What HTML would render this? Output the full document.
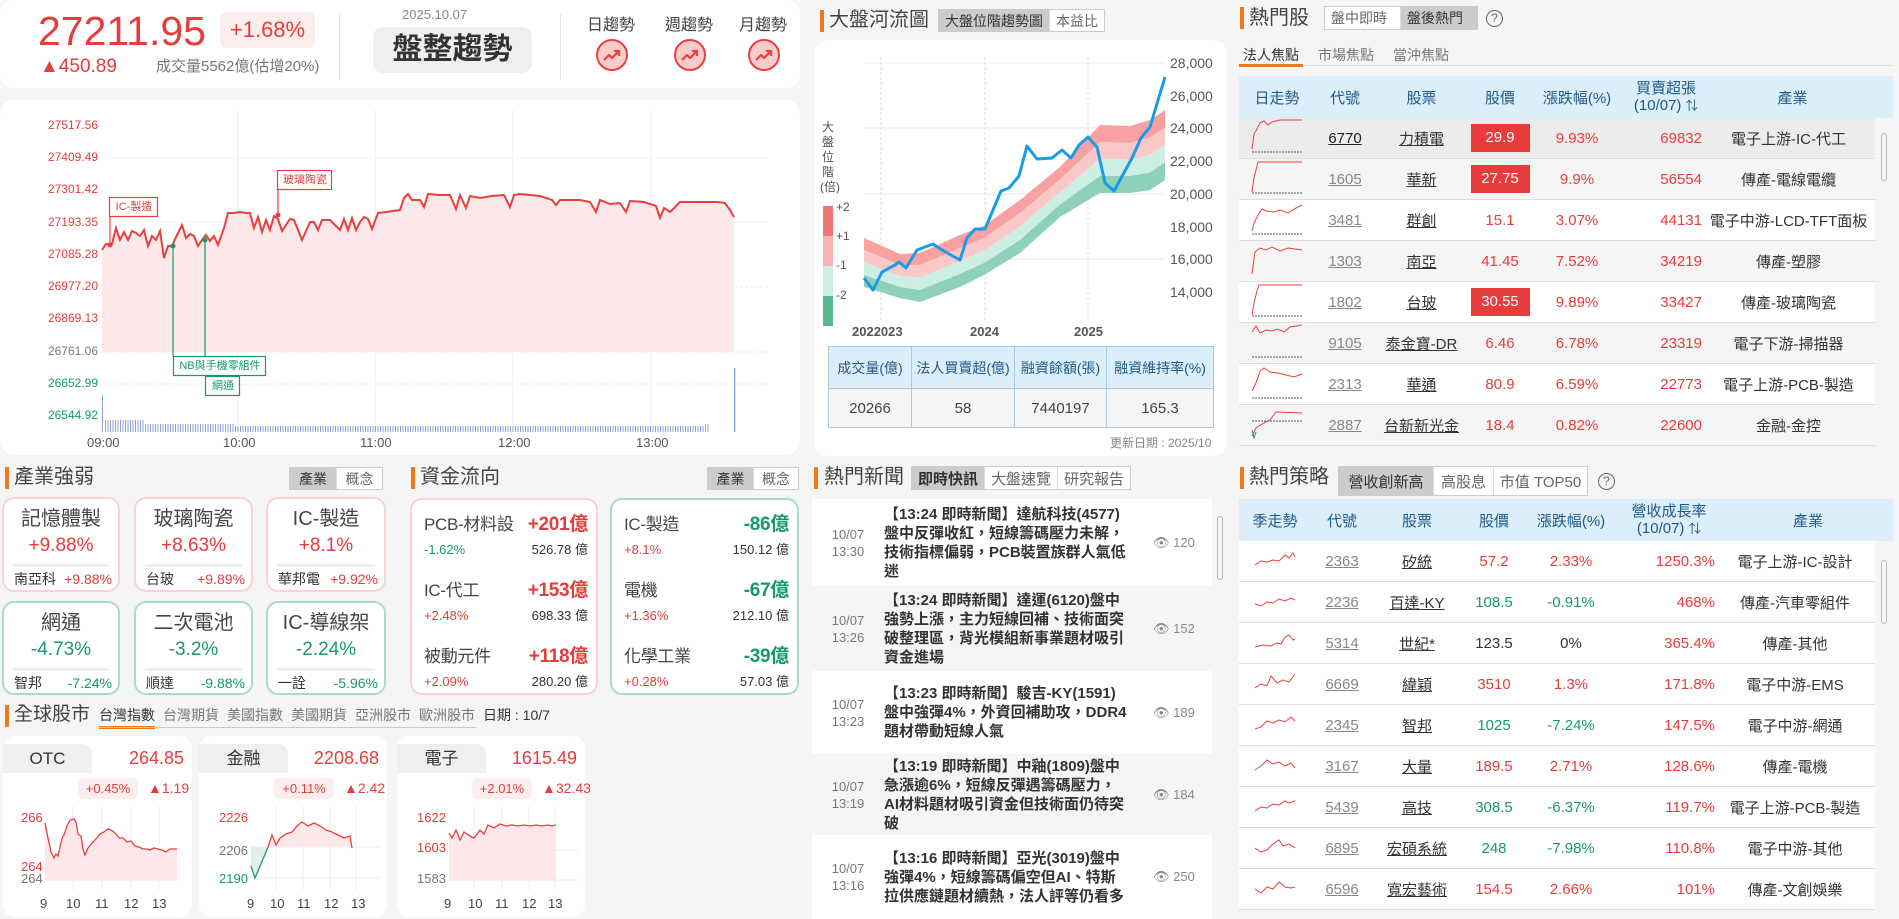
<!DOCTYPE html>
<html><head><meta charset="utf-8">
<style>
*{box-sizing:border-box;margin:0;padding:0}
body{width:1899px;height:919px;overflow:hidden;background:#f5f5f5;font-family:"Liberation Sans","Noto Sans CJK TC",sans-serif;color:#333;position:relative}
.a{position:absolute}
.card{position:absolute;background:#fff;border-radius:14px}
.bar{position:absolute;width:4px;background:#f07a1a}
.h{position:absolute;font-size:20px;color:#444;line-height:22px}
.tabs{position:absolute;display:flex;border:1px solid #ccc;background:#fff;font-size:14px;color:#666;white-space:nowrap}
.tabs div{padding:0 6px;display:flex;align-items:center;border-left:1px solid #ddd}
.tabs div:first-child{border-left:none}
.tabs .on{background:#ccc;color:#333}
.r{color:#e63c3c}.g{color:#169a6a}
.ic{position:absolute;border-radius:12px;background:#fff;text-align:center}
.ic.rb{border:2px solid #f9d2d2}.ic.gb{border:2px solid #a9dcc6}
.ic .t{font-size:20px;color:#444;margin-top:8px;line-height:24px}
.ic .p{font-size:19px;line-height:24px;margin-top:3px}
.ic .ln{height:3px;background:#eee;margin:6px 9px 0}
.ic .s{display:flex;justify-content:space-between;font-size:14px;padding:2px 6px 0 10px;line-height:20px}
.ff{position:absolute;border-radius:12px;background:#fff;padding:12px 8px 0 12px}
.ff.rb{border:2px solid #f9d2d2}.ff.gb{border:2px solid #a9dcc6}
.ff .row{height:66px}
.ff .l1{display:flex;justify-content:space-between;font-size:17px;line-height:26px;color:#444;white-space:nowrap;letter-spacing:-0.3px}
.ff .l1 b{font-size:19px}
.ff .l2{display:flex;justify-content:space-between;font-size:13px;line-height:20px;margin-top:2px;white-space:nowrap}
.tbl{position:absolute;left:1239px;width:654px;font-size:15px}
.th{display:flex;background:#dbeef9;color:#1e5a8a;align-items:center;height:42px;font-size:15px}
.tr{display:flex;align-items:center;height:41px;border-bottom:1px solid #ddd}
.tbl div>span{display:block;text-align:center}
.u{text-decoration:underline}
.cg{color:#888}
.news{position:absolute;left:812px;width:400px;display:flex;align-items:center}
.news .d{width:72px;text-align:center;font-size:13px;color:#777;line-height:17px}
.news .x{width:245px;font-size:15px;line-height:19px;color:#333;font-weight:bold}
.news .v{margin-left:24px;font-size:13px;color:#888}
.gmb{position:absolute;background:#fff;border-radius:12px;top:736px;height:181px}
.gm{position:absolute;top:736px;height:181px}
.gm .tab{position:absolute;left:0;top:8px;width:89px;height:29px;background:#eeeff1;border-radius:0 10px 0 0;text-align:center;font-size:17px;line-height:29px;color:#333}
.gm .val{position:absolute;right:8px;top:12px;font-size:18px;color:#e63c3c}
.gm .pill{position:absolute;left:75px;top:42px;width:60px;height:21px;background:#fdeeee;border-radius:6px;font-size:13px;color:#e63c3c;text-align:center;line-height:21px}
.gm .ch{position:absolute;left:145px;top:42px;font-size:14px;color:#e63c3c;line-height:21px}
</style></head><body>

<!-- top-left summary card -->
<div class="card" style="left:0;top:0;width:800px;height:88px"></div>
<div class="a r" style="left:38px;top:8px;font-size:41px;line-height:46px">27211.95</div>
<div class="a r" style="left:220px;top:12px;width:95px;height:36px;background:#fdeeee;border-radius:6px;font-size:22px;line-height:36px;text-align:center">+1.68%</div>
<div class="a r" style="left:40px;top:55px;font-size:19px;line-height:24px">▲450.89</div>
<div class="a" style="left:156px;top:57px;font-size:15px;color:#777;line-height:20px">成交量5562億(估增20%)</div>
<div class="a" style="left:339px;top:14px;width:1px;height:66px;background:#e5e5e5"></div>
<div class="a" style="left:560px;top:14px;width:1px;height:66px;background:#e5e5e5"></div>
<div class="a" style="left:402px;top:7px;font-size:13px;color:#888">2025.10.07</div>
<div class="a" style="left:373px;top:27px;width:159px;height:46px;background:#efefef;border-radius:10px;font-size:30px;font-weight:bold;text-align:center;line-height:46px;color:#333">盤整趨勢</div>
<div class="a" style="left:587px;top:11px;font-size:16px;color:#444">日趨勢</div>
<div class="a" style="left:665px;top:11px;font-size:16px;color:#444">週趨勢</div>
<div class="a" style="left:739px;top:11px;font-size:16px;color:#444">月趨勢</div>

<div class="card" style="left:0;top:100px;width:800px;height:355px"></div>
<div class="card" style="left:814px;top:40px;width:413px;height:416px"></div>
<div class="a" style="left:812px;top:499px;width:400px;height:87px;background:#fff"></div>
<div class="a" style="left:812px;top:586px;width:400px;height:85px;background:#f5f5f5"></div>
<div class="a" style="left:812px;top:671px;width:400px;height:83px;background:#fff"></div>
<div class="a" style="left:812px;top:754px;width:400px;height:81px;background:#f5f5f5"></div>
<div class="a" style="left:812px;top:835px;width:400px;height:84px;background:#fff"></div>
<div class="gmb" style="left:3px;width:189px"></div>
<div class="gmb" style="left:199px;width:188px"></div>
<div class="gmb" style="left:397px;width:188px"></div>

<svg class="a" style="left:0;top:0" width="1899" height="919" viewBox="0 0 1899 919">
 <g fill="#fbcaca" stroke="#e84040" stroke-width="2">
  <circle cx="612" cy="55" r="15"/><circle cx="690" cy="55" r="15"/><circle cx="764" cy="55" r="15"/>
 </g>
 <g fill="none" stroke="#e84040" stroke-width="2.2" stroke-linejoin="round">
  <path d="M604 60l5-5 3 3 7-7M614 51h5v5"/><path d="M682 60l5-5 3 3 7-7M692 51h5v5"/><path d="M756 60l5-5 3 3 7-7M766 51h5v5"/>
 </g>
 <g stroke="#ececec" stroke-width="1" stroke-dasharray="3 2">
  <line x1="100" y1="158" x2="768" y2="158"/><line x1="100" y1="222" x2="768" y2="222"/><line x1="100" y1="287" x2="768" y2="287"/><line x1="100" y1="352" x2="768" y2="352"/><line x1="100" y1="384" x2="768" y2="384"/>
 </g>
 <g stroke="#ececec"><line x1="238" y1="110" x2="238" y2="432"/><line x1="375" y1="110" x2="375" y2="432"/><line x1="513" y1="110" x2="513" y2="432"/><line x1="651" y1="110" x2="651" y2="432"/></g>
 <path fill="#fce8e8" d="M102 250 L106 244 L112 244 L116 228 L120 240 L124 232 L128 240 L132 231 L136 233 L140 236 L144 230 L148 246 L152 236 L156 240 L160 231 L164 258 L168 246 L172 246 L176 237 L182 225 L186 238 L190 234 L194 236 L198 246 L202 240 L206 235 L210 241 L214 236 L218 245 L224 228 L228 213 L234 213 L240 212 L246 213 L250 213 L254 228 L258 217 L262 232 L266 220 L270 230 L274 216 L278 219 L282 231 L286 225 L290 219 L294 220 L298 230 L302 240 L306 231 L310 222 L314 222 L318 230 L322 220 L330 220 L336 226 L340 230 L344 219 L348 230 L352 218 L356 230 L360 222 L364 217 L368 219 L372 229 L378 213 L386 212 L400 210 L404 198 L408 194 L412 200 L420 200 L424 207 L428 194 L440 195 L450 195 L456 209 L460 195 L466 208 L470 196 L480 198 L492 196 L504 195 L510 207 L514 195 L520 194 L540 196 L552 200 L556 205 L560 200 L580 200 L590 202 L596 212 L600 200 L610 204 L620 203 L626 212 L630 201 L644 202 L656 206 L660 218 L664 208 L670 212 L674 208 L680 202 L700 202 L718 202 L725 203 L730 210 L734 217 L734 352 L102 352Z"/>
 <path fill="none" stroke="#e84040" stroke-width="2" d="M102 250 L106 244 L112 244 L116 228 L120 240 L124 232 L128 240 L132 231 L136 233 L140 236 L144 230 L148 246 L152 236 L156 240 L160 231 L164 258 L168 246 L172 246 L176 237 L182 225 L186 238 L190 234 L194 236 L198 246 L202 240 L206 235 L210 241 L214 236 L218 245 L224 228 L228 213 L234 213 L240 212 L246 213 L250 213 L254 228 L258 217 L262 232 L266 220 L270 230 L274 216 L278 219 L282 231 L286 225 L290 219 L294 220 L298 230 L302 240 L306 231 L310 222 L314 222 L318 230 L322 220 L330 220 L336 226 L340 230 L344 219 L348 230 L352 218 L356 230 L360 222 L364 217 L368 219 L372 229 L378 213 L386 212 L400 210 L404 198 L408 194 L412 200 L420 200 L424 207 L428 194 L440 195 L450 195 L456 209 L460 195 L466 208 L470 196 L480 198 L492 196 L504 195 L510 207 L514 195 L520 194 L540 196 L552 200 L556 205 L560 200 L580 200 L590 202 L596 212 L600 200 L610 204 L620 203 L626 212 L630 201 L644 202 L656 206 L660 218 L664 208 L670 212 L674 208 L680 202 L700 202 L718 202 L725 203 L730 210 L734 217"/>
 <defs><pattern id="vb" width="2.5" height="10" patternUnits="userSpaceOnUse"><rect width="1" height="10" fill="#8aa0d8"/></pattern></defs>
 <rect x="102" y="395" width="1" height="37" fill="#8aa0d8"/>
 <rect x="104" y="420" width="40" height="12" fill="url(#vb)"/>
 <rect x="144" y="424" width="90" height="8" fill="url(#vb)"/>
 <rect x="234" y="426" width="470" height="6" fill="url(#vb)"/>
 <rect x="704" y="424" width="6" height="8" fill="url(#vb)"/>
 <rect x="734" y="368" width="1.3" height="64" fill="#8aa0d8"/>
 <g fill="none" stroke-width="1.2">
  <line x1="110" y1="216" x2="110" y2="245" stroke="#e84040"/>
  <rect x="109.5" y="197.5" width="48" height="19" fill="#fff" stroke="#e84040"/>
  <line x1="278" y1="189" x2="278" y2="215" stroke="#e84040"/>
  <rect x="277.5" y="170.5" width="54" height="19" fill="#fff" stroke="#e84040"/>
  <line x1="173" y1="246" x2="173" y2="357" stroke="#169a6a"/>
  <line x1="205" y1="240" x2="205" y2="376" stroke="#169a6a"/>
  <rect x="173.5" y="356.5" width="92" height="19" fill="#fff" stroke="#169a6a"/>
  <rect x="205.5" y="376.5" width="34" height="19" fill="#fff" stroke="#169a6a"/>
 </g>
 <circle cx="173" cy="246" r="2.5" fill="#169a6a"/><circle cx="205" cy="240" r="2.5" fill="#169a6a"/><circle cx="110" cy="245" r="2.5" fill="#e84040"/><circle cx="278" cy="215" r="2.5" fill="#e84040"/>

 <g stroke="#e8e8e8"><line x1="864" y1="63" x2="1165" y2="63"/><line x1="864" y1="128" x2="1165" y2="128"/><line x1="864" y1="194" x2="1165" y2="194"/><line x1="864" y1="259" x2="1165" y2="259"/></g>
 <g stroke="#ddd" stroke-dasharray="3 2"><line x1="881" y1="57" x2="881" y2="320"/><line x1="985" y1="57" x2="985" y2="320"/><line x1="1088" y1="57" x2="1088" y2="320"/></g>
 <path fill="#f9a0a0" d="M864 238 L900 254 L920 253 L960 235 L984 226 L1020 200 L1060 167 L1100 125 L1130 126 L1150 120 L1165 110 L1165 127.5 L1150 137.5 L1130 143 L1100 142 L1060 179.5 L1020 213 L984 238 L960 248 L920 265 L900 265 L864 250Z"/>
 <path fill="#fbc8c8" d="M864 250 L900 265 L920 265 L960 248 L984 238 L1020 213 L1060 179.5 L1100 142 L1130 143 L1150 137.5 L1165 127.5 L1165 145 L1150 155 L1130 159.5 L1100 159 L1060 192 L1020 226.5 L984 250.5 L960 261 L920 277.5 L900 276 L864 262.5Z"/>
 <path fill="#cdeee2" d="M864 262.5 L900 276 L920 277.5 L960 261 L984 250.5 L1020 226.5 L1060 192 L1100 159 L1130 159.5 L1150 155 L1165 145 L1165 162.5 L1150 172.5 L1130 176 L1100 176 L1060 204.5 L1020 240 L984 263 L960 274 L920 290 L900 287 L864 275Z"/>
 <path fill="#8fd1b8" d="M864 275 L900 287 L920 290 L960 274 L984 263 L1020 240 L1060 204.5 L1100 176 L1130 176 L1150 172.5 L1165 162.5 L1165 180 L1150 190 L1130 193 L1100 193 L1060 217 L1020 253 L984 275 L960 287 L920 302 L900 298 L864 287Z"/>
 <path fill="none" stroke="#1a9be8" stroke-width="3" stroke-linejoin="round" d="M864 278 L873 290 L882 272 L895 265 L899 262 L906 268 L917 250 L933 244 L942 250 L960 260 L967 238 L975 229 L985 229 L993 210 L1001 191 L1009 188 L1019 176 L1027 146 L1037 159 L1052 158 L1062 150 L1071 158 L1079 145 L1088 137 L1097 147 L1105 183 L1114 191 L1132 158 L1141 138 L1150 127 L1165 77"/>
 <rect x="823" y="206" width="10" height="30" fill="#f07575"/>
 <rect x="823" y="236" width="10" height="30" fill="#f8b4b4"/>
 <rect x="823" y="266" width="10" height="30" fill="#cdeee2"/>
 <rect x="823" y="296" width="10" height="30" fill="#57b88f"/>

 <g stroke="#eee"><line x1="73" y1="806" x2="73" y2="890"/><line x1="102" y1="806" x2="102" y2="890"/><line x1="131" y1="806" x2="131" y2="890"/><line x1="159" y1="806" x2="159" y2="890"/>
 <line x1="276" y1="806" x2="276" y2="890"/><line x1="303" y1="806" x2="303" y2="890"/><line x1="330" y1="806" x2="330" y2="890"/><line x1="356" y1="806" x2="356" y2="890"/>
 <line x1="474" y1="806" x2="474" y2="890"/><line x1="502" y1="806" x2="502" y2="890"/><line x1="529" y1="806" x2="529" y2="890"/><line x1="555" y1="806" x2="555" y2="890"/>
 <line x1="45" y1="866" x2="178" y2="866"/><line x1="45" y1="880" x2="178" y2="880"/><line x1="250" y1="847" x2="380" y2="847"/><line x1="250" y1="878" x2="380" y2="878"/><line x1="448" y1="850" x2="578" y2="850"/><line x1="448" y1="880" x2="578" y2="880"/></g>
 <path fill="#fce8e8" d="M45 823 L48 838 L51 852 L54 858 L56 854 L58 856 L62 838 L64 835 L67 826 L70 820 L74 819 L76 822 L78 834 L81 836 L83 849 L85 855 L88 848 L92 843 L96 839 L100 834 L104 832 L108 829 L111 830 L115 833 L119 838 L123 838 L127 842 L131 841 L135 846 L139 847 L143 849 L147 849 L150 850 L154 848 L158 849 L162 850 L166 852 L170 849 L174 849 L177 849 L177 880 L45 880Z"/>
 <path fill="none" stroke="#e84040" stroke-width="1.3" d="M45 823 L48 838 L51 852 L54 858 L56 854 L58 856 L62 838 L64 835 L67 826 L70 820 L74 819 L76 822 L78 834 L81 836 L83 849 L85 855 L88 848 L92 843 L96 839 L100 834 L104 832 L108 829 L111 830 L115 833 L119 838 L123 838 L127 842 L131 841 L135 846 L139 847 L143 849 L147 849 L150 850 L154 848 L158 849 L162 850 L166 852 L170 849 L174 849 L177 849"/>
 <path fill="#e4efea" d="M251 847 L251 866 L255 878 L260 866 L266 852 L268 847Z"/>
 <path fill="none" stroke="#169a6a" stroke-width="1.3" d="M251 866 L255 878 L260 866 L266 852 L268 847"/>
 <path fill="#fce8e8" d="M268 847 L272 835 L276 845 L280 838 L286 834 L292 832 L297 826 L302 822 L308 826 L314 823 L320 826 L326 830 L332 832 L338 835 L344 838 L350 836 L352 848 L352 847Z"/>
 <path fill="none" stroke="#e84040" stroke-width="1.3" d="M268 847 L272 835 L276 845 L280 838 L286 834 L292 832 L297 826 L302 822 L308 826 L314 823 L320 826 L326 830 L332 832 L338 835 L344 838 L350 836 L352 848"/>
 <path fill="#fce8e8" d="M449 833 L452 838 L456 830 L460 840 L464 832 L470 836 L474 838 L480 830 L484 834 L488 825 L494 828 L500 824 L506 826 L512 825 L518 826 L524 825 L530 826 L536 825 L542 826 L548 825 L552 826 L556 825 L556 880 L449 880Z"/>
 <path fill="none" stroke="#e84040" stroke-width="1.3" d="M449 833 L452 838 L456 830 L460 840 L464 832 L470 836 L474 838 L480 830 L484 834 L488 825 L494 828 L500 824 L506 826 L512 825 L518 826 L524 825 L530 826 L536 825 L542 826 L548 825 L552 826 L556 825"/>
</svg>

<div class="a" style="left:40px;top:110px;width:58px;font-size:12px;line-height:15px;text-align:right">
 <div class="r" style="position:absolute;top:8px;right:0">27517.56</div>
 <div class="r" style="position:absolute;top:40px;right:0">27409.49</div>
 <div class="r" style="position:absolute;top:72px;right:0">27301.42</div>
 <div class="r" style="position:absolute;top:105px;right:0">27193.35</div>
 <div class="r" style="position:absolute;top:137px;right:0">27085.28</div>
 <div class="r" style="position:absolute;top:169px;right:0">26977.20</div>
 <div class="r" style="position:absolute;top:201px;right:0">26869.13</div>
 <div style="position:absolute;top:234px;right:0;color:#777">26761.06</div>
 <div class="g" style="position:absolute;top:266px;right:0">26652.99</div>
 <div class="g" style="position:absolute;top:298px;right:0">26544.92</div>
</div>
<div class="a" style="left:87px;top:435px;font-size:13px;color:#555">09:00</div>
<div class="a" style="left:223px;top:435px;font-size:13px;color:#555">10:00</div>
<div class="a" style="left:360px;top:435px;font-size:13px;color:#555">11:00</div>
<div class="a" style="left:498px;top:435px;font-size:13px;color:#555">12:00</div>
<div class="a" style="left:636px;top:435px;font-size:13px;color:#555">13:00</div>
<div class="a r" style="left:110px;top:199px;width:48px;font-size:11px;text-align:center;line-height:17px">IC-製造</div>
<div class="a r" style="left:278px;top:172px;width:54px;font-size:11px;text-align:center;line-height:17px">玻璃陶瓷</div>
<div class="a g" style="left:174px;top:358px;width:92px;font-size:11px;text-align:center;line-height:17px">NB與手機零組件</div>
<div class="a g" style="left:206px;top:378px;width:34px;font-size:11px;text-align:center;line-height:17px">網通</div>

<div class="bar" style="left:820px;top:10px;height:22px"></div>
<div class="h" style="left:829px;top:9px">大盤河流圖</div>
<div class="tabs" style="left:938px;top:9px;height:23px"><div class="on">大盤位階趨勢圖</div><div>本益比</div></div>
<div class="a" style="left:820px;top:120px;width:16px;font-size:12px;line-height:15px;text-align:center;color:#555">大<br>盤<br>位<br>階<br>(倍)</div>
<div class="a" style="left:836px;top:200px;font-size:12px;color:#555;line-height:14px">+2</div>
<div class="a" style="left:836px;top:229px;font-size:12px;color:#555;line-height:14px">+1</div>
<div class="a" style="left:836px;top:258px;font-size:12px;color:#555;line-height:14px">-1</div>
<div class="a" style="left:836px;top:288px;font-size:12px;color:#555;line-height:14px">-2</div>
<div class="a" style="left:1170px;top:54px;font-size:14px;color:#555;line-height:18px">28,000<br><span style="display:block;margin-top:15px">26,000</span><span style="display:block;margin-top:14px">24,000</span><span style="display:block;margin-top:15px">22,000</span><span style="display:block;margin-top:15px">20,000</span><span style="display:block;margin-top:15px">18,000</span><span style="display:block;margin-top:14px">16,000</span><span style="display:block;margin-top:15px">14,000</span></div>
<div class="a" style="left:852px;top:324px;font-size:13px;font-weight:bold;color:#555">2022023</div>
<div class="a" style="left:970px;top:324px;font-size:13px;font-weight:bold;color:#555">2024</div>
<div class="a" style="left:1074px;top:324px;font-size:13px;font-weight:bold;color:#555">2025</div>
<table class="a" style="left:828px;top:346px;width:386px;border-collapse:collapse;font-size:14px;text-align:center">
<tr style="height:42px;background:#dbeef9;color:#1e5a8a"><td style="border:1px solid #a9cbe0;width:83px">成交量(億)</td><td style="border:1px solid #a9cbe0;width:103px">法人買賣超(億)</td><td style="border:1px solid #a9cbe0;width:92px">融資餘額(張)</td><td style="border:1px solid #a9cbe0">融資維持率(%)</td></tr>
<tr style="height:39px;background:#f5f5f5;font-size:15px;color:#444"><td style="border:1px solid #a9cbe0">20266</td><td style="border:1px solid #a9cbe0">58</td><td style="border:1px solid #a9cbe0">7440197</td><td style="border:1px solid #a9cbe0">165.3</td></tr>
</table>
<div class="a" style="left:1110px;top:434px;font-size:12px;color:#888">更新日期 : 2025/10</div>

<div class="bar" style="left:1240px;top:7px;height:22px"></div>
<div class="h" style="left:1249px;top:7px">熱門股</div>
<div class="tabs" style="left:1324px;top:6px;height:24px;font-size:14px"><div style="width:75px">盤中即時</div><div class="on" style="width:77px">盤後熱門</div></div>
<div class="a" style="left:1486px;top:10px;width:17px;height:17px;border:1.5px solid #666;border-radius:50%;font-size:12px;text-align:center;line-height:14px;color:#666">?</div>
<div class="a" style="left:1243px;top:45px;font-size:14px;color:#333">法人焦點</div>
<div class="a" style="left:1318px;top:45px;font-size:14px;color:#777">市場焦點</div>
<div class="a" style="left:1393px;top:45px;font-size:14px;color:#777">當沖焦點</div>
<div class="a" style="left:1239px;top:65px;width:654px;height:1px;background:#ddd"></div>
<div class="a" style="left:1239px;top:64px;width:64px;height:3px;background:#f07a1a"></div>

<div class="tbl" style="top:76px">
 <div class="th"><span style="width:76px">日走勢</span><span style="width:60px">代號</span><span style="width:93px">股票</span><span style="width:64px">股價</span><span style="width:90px">漲跌幅(%)</span><span style="width:88px;line-height:17px">買賣超張<br>(10/07) <small>⇅</small></span><span style="width:165px">產業</span></div>
</div>
<div class="tbl" style="top:118px;width:636px">
 <div class="tr" style="background:#ececec"><span style="width:76px"><svg width="54" height="34"><path d="M2 30 L4 15 L7 10 L10 4 L14 2 L18 6 L22 3 L30 1 L52 1" fill="none" stroke="#e84040"/><line x1="2" y1="33" x2="52" y2="33" stroke="#555" stroke-dasharray="2 1"/></svg></span><span class="u" style="width:60px;color:#222">6770</span><span class="u" style="width:93px">力積電</span><span style="width:64px"><span style="display:inline-block;width:59px;height:28px;line-height:28px;background:#e83c3c;color:#fff">29.9</span></span><span class="r" style="width:90px">9.93%</span><span class="r" style="width:80px;text-align:right!important">69832</span><span style="width:173px">電子上游-IC-代工</span></div>
 <div class="tr" style="background:#f5f5f5"><span style="width:76px"><svg width="54" height="34"><path d="M2 32 L4 18 L6 10 L8 2 L52 2" fill="none" stroke="#e84040"/><line x1="2" y1="33" x2="52" y2="33" stroke="#555" stroke-dasharray="2 1"/></svg></span><span class="u cg" style="width:60px">1605</span><span class="u" style="width:93px">華新</span><span style="width:64px"><span style="display:inline-block;width:59px;height:28px;line-height:28px;background:#e83c3c;color:#fff">27.75</span></span><span class="r" style="width:90px">9.9%</span><span class="r" style="width:80px;text-align:right!important">56554</span><span style="width:173px">傳產-電線電纜</span></div>
 <div class="tr" style="background:#fff"><span style="width:76px"><svg width="54" height="34"><path d="M2 30 L4 22 L8 14 L12 8 L16 10 L24 11 L30 9 L38 12 L44 8 L52 4" fill="none" stroke="#e84040"/><line x1="2" y1="33" x2="52" y2="33" stroke="#555" stroke-dasharray="2 1"/></svg></span><span class="u cg" style="width:60px">3481</span><span class="u" style="width:93px">群創</span><span class="r" style="width:64px">15.1</span><span class="r" style="width:90px">3.07%</span><span class="r" style="width:80px;text-align:right!important">44131</span><span style="width:173px">電子中游-LCD-TFT面板</span></div>
 <div class="tr" style="background:#f5f5f5"><span style="width:76px"><svg width="54" height="34"><path d="M2 32 L5 10 L10 6 L16 8 L22 5 L30 9 L38 6 L52 8" fill="none" stroke="#e84040"/></svg></span><span class="u cg" style="width:60px">1303</span><span class="u" style="width:93px">南亞</span><span class="r" style="width:64px">41.45</span><span class="r" style="width:90px">7.52%</span><span class="r" style="width:80px;text-align:right!important">34219</span><span style="width:173px">傳產-塑膠</span></div>
 <div class="tr" style="background:#fff"><span style="width:76px"><svg width="54" height="34"><path d="M2 32 L4 20 L7 8 L9 2 L52 2" fill="none" stroke="#e84040"/><line x1="2" y1="33" x2="52" y2="33" stroke="#555" stroke-dasharray="2 1"/></svg></span><span class="u cg" style="width:60px">1802</span><span class="u" style="width:93px">台玻</span><span style="width:64px"><span style="display:inline-block;width:59px;height:28px;line-height:28px;background:#e83c3c;color:#fff">30.55</span></span><span class="r" style="width:90px">9.89%</span><span class="r" style="width:80px;text-align:right!important">33427</span><span style="width:173px">傳產-玻璃陶瓷</span></div>
 <div class="tr" style="background:#f5f5f5"><span style="width:76px"><svg width="54" height="34"><path d="M2 8 L6 2 L10 9 L16 6 L22 7 L28 5 L34 8 L40 3 L52 1" fill="none" stroke="#e84040"/><line x1="2" y1="33" x2="52" y2="33" stroke="#555" stroke-dasharray="2 1"/></svg></span><span class="u cg" style="width:60px">9105</span><span class="u" style="width:93px">泰金寶-DR</span><span class="r" style="width:64px">6.46</span><span class="r" style="width:90px">6.78%</span><span class="r" style="width:80px;text-align:right!important">23319</span><span style="width:173px">電子下游-掃描器</span></div>
 <div class="tr" style="background:#fff"><span style="width:76px"><svg width="54" height="34"><path d="M2 26 L6 18 L10 6 L14 3 L20 7 L28 8 L36 10 L44 12 L52 9" fill="none" stroke="#e84040"/><line x1="2" y1="33" x2="52" y2="33" stroke="#555" stroke-dasharray="2 1"/></svg></span><span class="u cg" style="width:60px">2313</span><span class="u" style="width:93px">華通</span><span class="r" style="width:64px">80.9</span><span class="r" style="width:90px">6.59%</span><span class="r" style="width:80px;text-align:right!important">22773</span><span style="width:173px">電子上游-PCB-製造</span></div>
 <div class="tr" style="background:#f5f5f5"><span style="width:76px"><svg width="54" height="34"><path d="M2 30 L6 22 L12 18 L20 14 L26 6 L52 7" fill="none" stroke="#e84040"/><path d="M2 24 L4 32 L6 26" fill="none" stroke="#169a6a"/><line x1="2" y1="15" x2="52" y2="15" stroke="#555" stroke-dasharray="2 1"/></svg></span><span class="u cg" style="width:60px">2887</span><span class="u" style="width:93px">台新新光金</span><span class="r" style="width:64px">18.4</span><span class="r" style="width:90px">0.82%</span><span class="r" style="width:80px;text-align:right!important">22600</span><span style="width:173px">金融-金控</span></div>
</div>
<div class="a" style="left:1881px;top:133px;width:6px;height:48px;border:1px solid #bbb;border-radius:3px"></div>

<div class="bar" style="left:5px;top:467px;height:22px"></div>
<div class="h" style="left:14px;top:466px">產業強弱</div>
<div class="tabs" style="left:289px;top:467px;height:23px;font-size:14px"><div class="on" style="width:46px;justify-content:center">產業</div><div style="width:46px;justify-content:center">概念</div></div>
<div class="ic rb" style="left:2px;top:497px;width:118px;height:95px"><div class="t">記憶體製</div><div class="p r">+9.88%</div><div class="ln"></div><div class="s"><span>南亞科</span><span class="r">+9.88%</span></div></div>
<div class="ic rb" style="left:134px;top:497px;width:119px;height:95px"><div class="t">玻璃陶瓷</div><div class="p r">+8.63%</div><div class="ln"></div><div class="s"><span>台玻</span><span class="r">+9.89%</span></div></div>
<div class="ic rb" style="left:266px;top:497px;width:120px;height:95px"><div class="t">IC-製造</div><div class="p r">+8.1%</div><div class="ln"></div><div class="s"><span>華邦電</span><span class="r">+9.92%</span></div></div>
<div class="ic gb" style="left:2px;top:601px;width:118px;height:94px"><div class="t">網通</div><div class="p g">-4.73%</div><div class="ln"></div><div class="s"><span>智邦</span><span class="g">-7.24%</span></div></div>
<div class="ic gb" style="left:134px;top:601px;width:119px;height:94px"><div class="t">二次電池</div><div class="p g">-3.2%</div><div class="ln"></div><div class="s"><span>順達</span><span class="g">-9.88%</span></div></div>
<div class="ic gb" style="left:266px;top:601px;width:120px;height:94px"><div class="t">IC-導線架</div><div class="p g">-2.24%</div><div class="ln"></div><div class="s"><span>一詮</span><span class="g">-5.96%</span></div></div>

<div class="bar" style="left:411px;top:467px;height:22px"></div>
<div class="h" style="left:420px;top:466px">資金流向</div>
<div class="tabs" style="left:707px;top:467px;height:23px;font-size:14px"><div class="on" style="width:45px;justify-content:center">產業</div><div style="width:45px;justify-content:center">概念</div></div>
<div class="ff rb" style="left:410px;top:498px;width:188px;height:197px">
 <div class="row"><div class="l1"><span>PCB-材料設</span><b class="r">+201億</b></div><div class="l2"><span class="g">-1.62%</span><span>526.78 億</span></div></div>
 <div class="row"><div class="l1"><span>IC-代工</span><b class="r">+153億</b></div><div class="l2"><span class="r">+2.48%</span><span>698.33 億</span></div></div>
 <div class="row"><div class="l1"><span>被動元件</span><b class="r">+118億</b></div><div class="l2"><span class="r">+2.09%</span><span>280.20 億</span></div></div>
</div>
<div class="ff gb" style="left:610px;top:498px;width:189px;height:197px">
 <div class="row"><div class="l1"><span>IC-製造</span><b class="g">-86億</b></div><div class="l2"><span class="r">+8.1%</span><span>150.12 億</span></div></div>
 <div class="row"><div class="l1"><span>電機</span><b class="g">-67億</b></div><div class="l2"><span class="r">+1.36%</span><span>212.10 億</span></div></div>
 <div class="row"><div class="l1"><span>化學工業</span><b class="g">-39億</b></div><div class="l2"><span class="r">+0.28%</span><span>57.03 億</span></div></div>
</div>

<div class="bar" style="left:5px;top:705px;height:22px"></div>
<div class="h" style="left:14px;top:704px;font-size:19px">全球股市</div>
<div class="a" style="left:99px;top:706px;font-size:14px;color:#333;display:flex;gap:8px;line-height:18px">
<span style="border-bottom:3px solid #f07a1a;padding-bottom:2px">台灣指數</span><span style="color:#777">台灣期貨</span><span style="color:#777">美國指數</span><span style="color:#777">美國期貨</span><span style="color:#777">亞洲股市</span><span style="color:#777">歐洲股市</span><span>日期 : 10/7</span></div>
<div class="a" style="left:99px;top:727px;width:377px;height:1px;background:#ccc"></div>
<div class="gm" style="left:3px;width:189px"><div class="tab">OTC</div><div class="val">264.85</div><div class="pill">+0.45%</div><div class="ch">▲1.19</div></div>
<div class="gm" style="left:199px;width:188px"><div class="tab">金融</div><div class="val">2208.68</div><div class="pill">+0.11%</div><div class="ch">▲2.42</div></div>
<div class="gm" style="left:397px;width:188px"><div class="tab">電子</div><div class="val">1615.49</div><div class="pill">+2.01%</div><div class="ch">▲32.43</div></div>
<div class="a r" style="left:21px;top:810px;font-size:13px">266</div>
<div class="a r" style="left:21px;top:859px;font-size:13px">264</div>
<div class="a" style="left:21px;top:871px;font-size:13px;color:#777">264</div>
<div class="a r" style="left:219px;top:810px;font-size:13px">2226</div>
<div class="a" style="left:219px;top:843px;font-size:13px;color:#777">2206</div>
<div class="a g" style="left:219px;top:871px;font-size:13px">2190</div>
<div class="a r" style="left:417px;top:810px;font-size:13px">1622</div>
<div class="a r" style="left:417px;top:840px;font-size:13px">1603</div>
<div class="a" style="left:417px;top:871px;font-size:13px;color:#777">1583</div>
<div class="a" style="left:40px;top:896px;font-size:13px;color:#444"><span class="a" style="left:0">9</span><span class="a" style="left:26px">10</span><span class="a" style="left:55px">11</span><span class="a" style="left:84px">12</span><span class="a" style="left:112px">13</span></div>
<div class="a" style="left:247px;top:896px;font-size:13px;color:#444"><span class="a" style="left:0">9</span><span class="a" style="left:23px">10</span><span class="a" style="left:50px">11</span><span class="a" style="left:77px">12</span><span class="a" style="left:104px">13</span></div>
<div class="a" style="left:444px;top:896px;font-size:13px;color:#444"><span class="a" style="left:0">9</span><span class="a" style="left:24px">10</span><span class="a" style="left:51px">11</span><span class="a" style="left:78px">12</span><span class="a" style="left:104px">13</span></div>

<div class="bar" style="left:814px;top:467px;height:22px"></div>
<div class="h" style="left:824px;top:466px">熱門新聞</div>
<div class="tabs" style="left:911px;top:466px;height:24px;font-size:15px"><div class="on" style="font-weight:bold">即時快訊</div><div>大盤速覽</div><div>研究報告</div></div>
<div class="news" style="top:499px;height:87px"><div class="d">10/07<br>13:30</div><div class="x">【13:24 即時新聞】達航科技(4577)盤中反彈收紅，短線籌碼壓力未解，技術指標偏弱，PCB裝置族群人氣低迷</div><div class="v">👁 120</div></div>
<div class="news" style="top:586px;height:85px"><div class="d">10/07<br>13:26</div><div class="x">【13:24 即時新聞】達運(6120)盤中強勢上漲，主力短線回補、技術面突破整理區，背光模組新事業題材吸引資金進場</div><div class="v">👁 152</div></div>
<div class="news" style="top:671px;height:83px"><div class="d">10/07<br>13:23</div><div class="x">【13:23 即時新聞】駿吉-KY(1591)盤中強彈4%，外資回補助攻，DDR4題材帶動短線人氣</div><div class="v">👁 189</div></div>
<div class="news" style="top:754px;height:81px"><div class="d">10/07<br>13:19</div><div class="x">【13:19 即時新聞】中釉(1809)盤中急漲逾6%，短線反彈遇籌碼壓力，AI材料題材吸引資金但技術面仍待突破</div><div class="v">👁 184</div></div>
<div class="news" style="top:835px;height:84px"><div class="d">10/07<br>13:16</div><div class="x">【13:16 即時新聞】亞光(3019)盤中強彈4%，短線籌碼偏空但AI、特斯拉供應鏈題材續熱，法人評等仍看多</div><div class="v">👁 250</div></div>
<div class="a" style="left:1217px;top:516px;width:6px;height:64px;border:1px solid #bbb;border-radius:3px"></div>

<div class="bar" style="left:1240px;top:467px;height:22px"></div>
<div class="h" style="left:1249px;top:466px">熱門策略</div>
<div class="tabs" style="left:1338px;top:466px;height:30px;font-size:15px"><div class="on" style="width:94px;justify-content:center">營收創新高</div><div style="width:60px;justify-content:center">高股息</div><div style="width:94px;justify-content:center;padding:0 2px">市值 TOP50</div></div>
<div class="a" style="left:1598px;top:473px;width:17px;height:17px;border:1.5px solid #666;border-radius:50%;font-size:12px;text-align:center;line-height:14px;color:#666">?</div>
<div class="tbl" style="top:499px">
 <div class="th"><span style="width:72px">季走勢</span><span style="width:62px">代號</span><span style="width:88px">股票</span><span style="width:66px">股價</span><span style="width:88px">漲跌幅(%)</span><span style="width:108px;line-height:17px">營收成長率<br>(10/07) <small>⇅</small></span><span style="width:170px">產業</span></div>
</div>
<div class="tbl" style="top:541px;width:636px;background:#fff">
 <div class="tr"><span style="width:72px"><svg width="44" height="20"><path d="M2 16 L8 12 L14 13 L20 11 L26 12 L32 6 L36 9 L40 4 L42 8" fill="none" stroke="#e84040"/></svg></span><span class="u cg" style="width:62px">2363</span><span class="u" style="width:88px">矽統</span><span class="r" style="width:66px">57.2</span><span class="r" style="width:88px">2.33%</span><span class="r" style="width:100px;text-align:right!important">1250.3%</span><span style="width:160px">電子上游-IC-設計</span></div>
 <div class="tr"><span style="width:72px"><svg width="44" height="20"><path d="M2 14 L8 16 L14 12 L20 13 L26 9 L32 11 L38 8 L42 10" fill="none" stroke="#e84040"/></svg></span><span class="u cg" style="width:62px">2236</span><span class="u" style="width:88px">百達-KY</span><span class="g" style="width:66px">108.5</span><span class="g" style="width:88px">-0.91%</span><span class="r" style="width:100px;text-align:right!important">468%</span><span style="width:160px">傳產-汽車零組件</span></div>
 <div class="tr"><span style="width:72px"><svg width="44" height="20"><path d="M2 16 L10 14 L18 15 L24 12 L28 13 L32 6 L36 4 L40 9 L42 8" fill="none" stroke="#e84040"/></svg></span><span class="u cg" style="width:62px">5314</span><span class="u" style="width:88px">世紀*</span><span style="width:66px">123.5</span><span style="width:88px">0%</span><span class="r" style="width:100px;text-align:right!important">365.4%</span><span style="width:160px">傳產-其他</span></div>
 <div class="tr"><span style="width:72px"><svg width="44" height="20"><path d="M2 16 L8 12 L14 14 L18 4 L24 11 L30 8 L36 10 L42 2" fill="none" stroke="#e84040"/></svg></span><span class="u cg" style="width:62px">6669</span><span class="u" style="width:88px">緯穎</span><span class="r" style="width:66px">3510</span><span class="r" style="width:88px">1.3%</span><span class="r" style="width:100px;text-align:right!important">171.8%</span><span style="width:160px">電子中游-EMS</span></div>
 <div class="tr"><span style="width:72px"><svg width="44" height="20"><path d="M2 16 L8 14 L14 8 L20 10 L26 7 L32 9 L38 4 L42 8" fill="none" stroke="#e84040"/></svg></span><span class="u cg" style="width:62px">2345</span><span class="u" style="width:88px">智邦</span><span class="g" style="width:66px">1025</span><span class="g" style="width:88px">-7.24%</span><span class="r" style="width:100px;text-align:right!important">147.5%</span><span style="width:160px">電子中游-網通</span></div>
 <div class="tr"><span style="width:72px"><svg width="44" height="20"><path d="M2 16 L8 12 L14 6 L20 10 L26 8 L32 12 L38 9 L42 14" fill="none" stroke="#e84040"/></svg></span><span class="u cg" style="width:62px">3167</span><span class="u" style="width:88px">大量</span><span class="r" style="width:66px">189.5</span><span class="r" style="width:88px">2.71%</span><span class="r" style="width:100px;text-align:right!important">128.6%</span><span style="width:160px">傳產-電機</span></div>
 <div class="tr"><span style="width:72px"><svg width="44" height="20"><path d="M2 16 L8 12 L14 13 L20 9 L26 10 L32 6 L36 8 L42 6" fill="none" stroke="#e84040"/></svg></span><span class="u cg" style="width:62px">5439</span><span class="u" style="width:88px">高技</span><span class="g" style="width:66px">308.5</span><span class="g" style="width:88px">-6.37%</span><span class="r" style="width:100px;text-align:right!important">119.7%</span><span style="width:160px">電子上游-PCB-製造</span></div>
 <div class="tr"><span style="width:72px"><svg width="44" height="20"><path d="M2 12 L8 16 L14 14 L20 8 L26 4 L30 10 L36 8 L42 12" fill="none" stroke="#e84040"/></svg></span><span class="u cg" style="width:62px">6895</span><span class="u" style="width:88px">宏碩系統</span><span class="g" style="width:66px">248</span><span class="g" style="width:88px">-7.98%</span><span class="r" style="width:100px;text-align:right!important">110.8%</span><span style="width:160px">電子中游-其他</span></div>
 <div class="tr"><span style="width:72px"><svg width="44" height="20"><path d="M2 12 L8 16 L14 10 L20 12 L26 5 L32 10 L38 11 L42 10" fill="none" stroke="#e84040"/></svg></span><span class="u cg" style="width:62px">6596</span><span class="u" style="width:88px">寬宏藝術</span><span class="r" style="width:66px">154.5</span><span class="r" style="width:88px">2.66%</span><span class="r" style="width:100px;text-align:right!important">101%</span><span style="width:160px">傳產-文創娛樂</span></div>
</div>
<div class="a" style="left:1881px;top:560px;width:6px;height:64px;border:1px solid #bbb;border-radius:3px"></div>
</body></html>
